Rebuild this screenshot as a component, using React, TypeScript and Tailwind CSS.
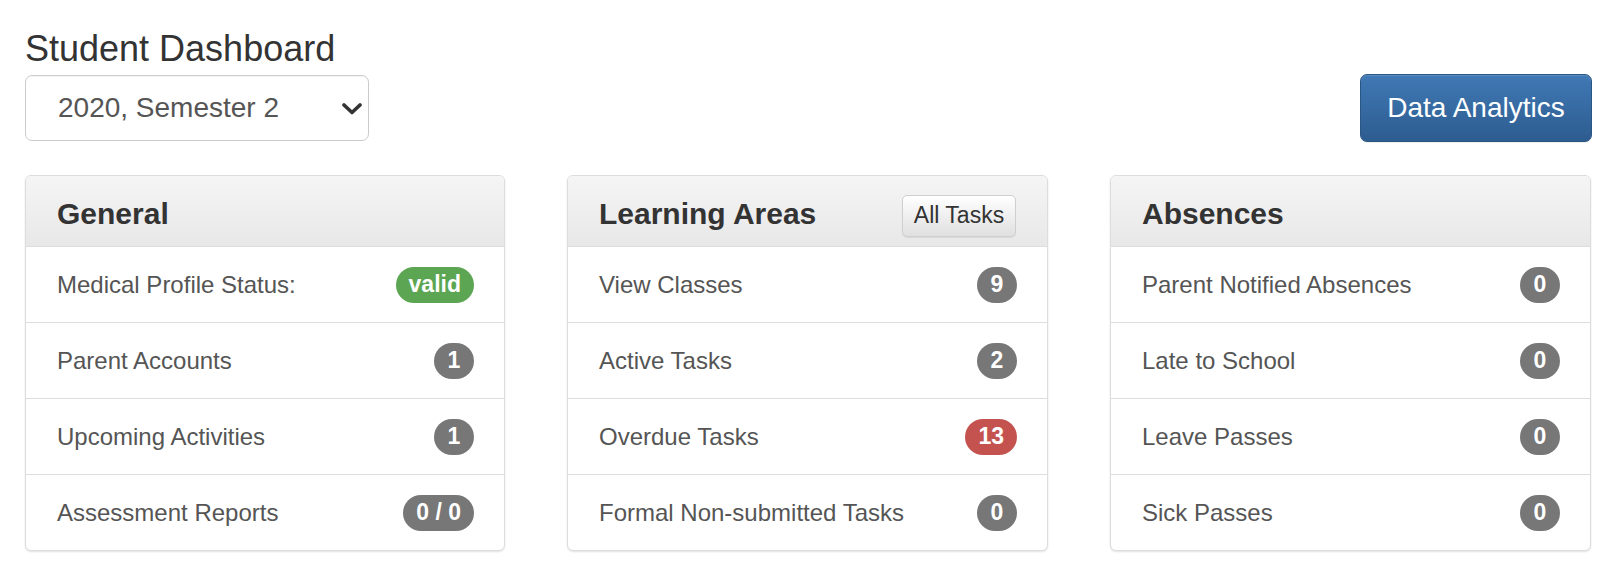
import React from "react";

type Row = { label: string; value: string; tone?: "grey" | "green" | "red" };

const Badge = ({ value, tone = "grey" }: { value: string; tone?: Row["tone"] }) => {
  const bg =
    tone === "green" ? "bg-[#5ca552]" : tone === "red" ? "bg-[#c4534f]" : "bg-[#777777]";
  return (
    <span
      className={`${bg} inline-flex items-center justify-center h-[36px] min-w-[40px] px-[13px] rounded-full text-white font-bold text-[23px] leading-none whitespace-nowrap`}
    >
      {value}
    </span>
  );
};

const Card = ({
  title,
  rows,
  action,
}: {
  title: string;
  rows: Row[];
  action?: React.ReactNode;
}) => (
  <div className="border border-[#dddddd] rounded-[6px] bg-white shadow-[0_1px_2px_rgba(0,0,0,0.12)] overflow-hidden">
    <div className="h-[71px] pt-[6px] pl-[31px] pr-[31px] flex items-center justify-between bg-gradient-to-b from-[#f5f5f5] to-[#e8e8e8] border-b border-[#dddddd]">
      <span className="text-[30px] font-bold text-[#333333] leading-[36px]">{title}</span>
      {action}
    </div>
    {rows.map((r, i) => (
      <div
        key={r.label}
        className={`h-[75px] pl-[31px] pr-[30px] flex items-center justify-between ${
          i < rows.length - 1 ? "border-b border-[#dddddd] box-content" : ""
        }`}
      >
        <span className="text-[24px] text-[#555555] leading-[30px]">{r.label}</span>
        <Badge value={r.value} tone={r.tone} />
      </div>
    ))}
  </div>
);

export default function App() {
  return (
    <div
      className="bg-white min-h-[582px] pl-[25px] pt-[29px]"
      style={{ fontFamily: '"Liberation Sans", Arial, Helvetica, sans-serif' }}
    >
      <h1 className="text-[36px] leading-[40px] text-[#333333] font-normal">Student Dashboard</h1>
      <div className="w-[1567px] mt-[5px] flex items-center justify-between">
        <div className="w-[344px] h-[66px] border border-[#cccccc] rounded-[7px] bg-white flex items-center justify-between pl-[32px] pr-[6px] shadow-[inset_0_1px_1px_rgba(0,0,0,0.04)]">
          <span className="text-[28px] text-[#555555] leading-none">2020, Semester 2</span>
          <svg width="20" height="12" viewBox="0 0 20 12" className="mt-[1px]">
            <path
              d="M2 2 L10 9.5 L18 2"
              fill="none"
              stroke="#333333"
              strokeWidth="3.6"
              strokeLinecap="round"
              strokeLinejoin="round"
            />
          </svg>
        </div>
        <button className="w-[232px] h-[68px] rounded-[7px] border border-[#2a5684] bg-gradient-to-b from-[#4079b6] to-[#2d5c8f] text-white text-[28px] leading-none shadow-[inset_0_1px_0_rgba(255,255,255,0.15),0_1px_1px_rgba(0,0,0,0.075)]">
          Data Analytics
        </button>
      </div>
      <div className="w-[1566px] mt-[33px] grid grid-cols-[480px_481px_481px] gap-x-[62px]">
        <Card
          title="General"
          rows={[
            { label: "Medical Profile Status:", value: "valid", tone: "green" },
            { label: "Parent Accounts", value: "1" },
            { label: "Upcoming Activities", value: "1" },
            { label: "Assessment Reports", value: "0 / 0" },
          ]}
        />
        <Card
          title="Learning Areas"
          action={
            <button className="mt-[3px] w-[114px] h-[42px] rounded-[5px] border border-[#cfcfcf] bg-gradient-to-b from-[#ffffff] to-[#e0e0e0] text-[23px] text-[#333333] leading-none shadow-[inset_0_1px_0_rgba(255,255,255,0.15),0_1px_1px_rgba(0,0,0,0.075)]">
              All Tasks
            </button>
          }
          rows={[
            { label: "View Classes", value: "9" },
            { label: "Active Tasks", value: "2" },
            { label: "Overdue Tasks", value: "13", tone: "red" },
            { label: "Formal Non-submitted Tasks", value: "0" },
          ]}
        />
        <Card
          title="Absences"
          rows={[
            { label: "Parent Notified Absences", value: "0" },
            { label: "Late to School", value: "0" },
            { label: "Leave Passes", value: "0" },
            { label: "Sick Passes", value: "0" },
          ]}
        />
      </div>
    </div>
  );
}
